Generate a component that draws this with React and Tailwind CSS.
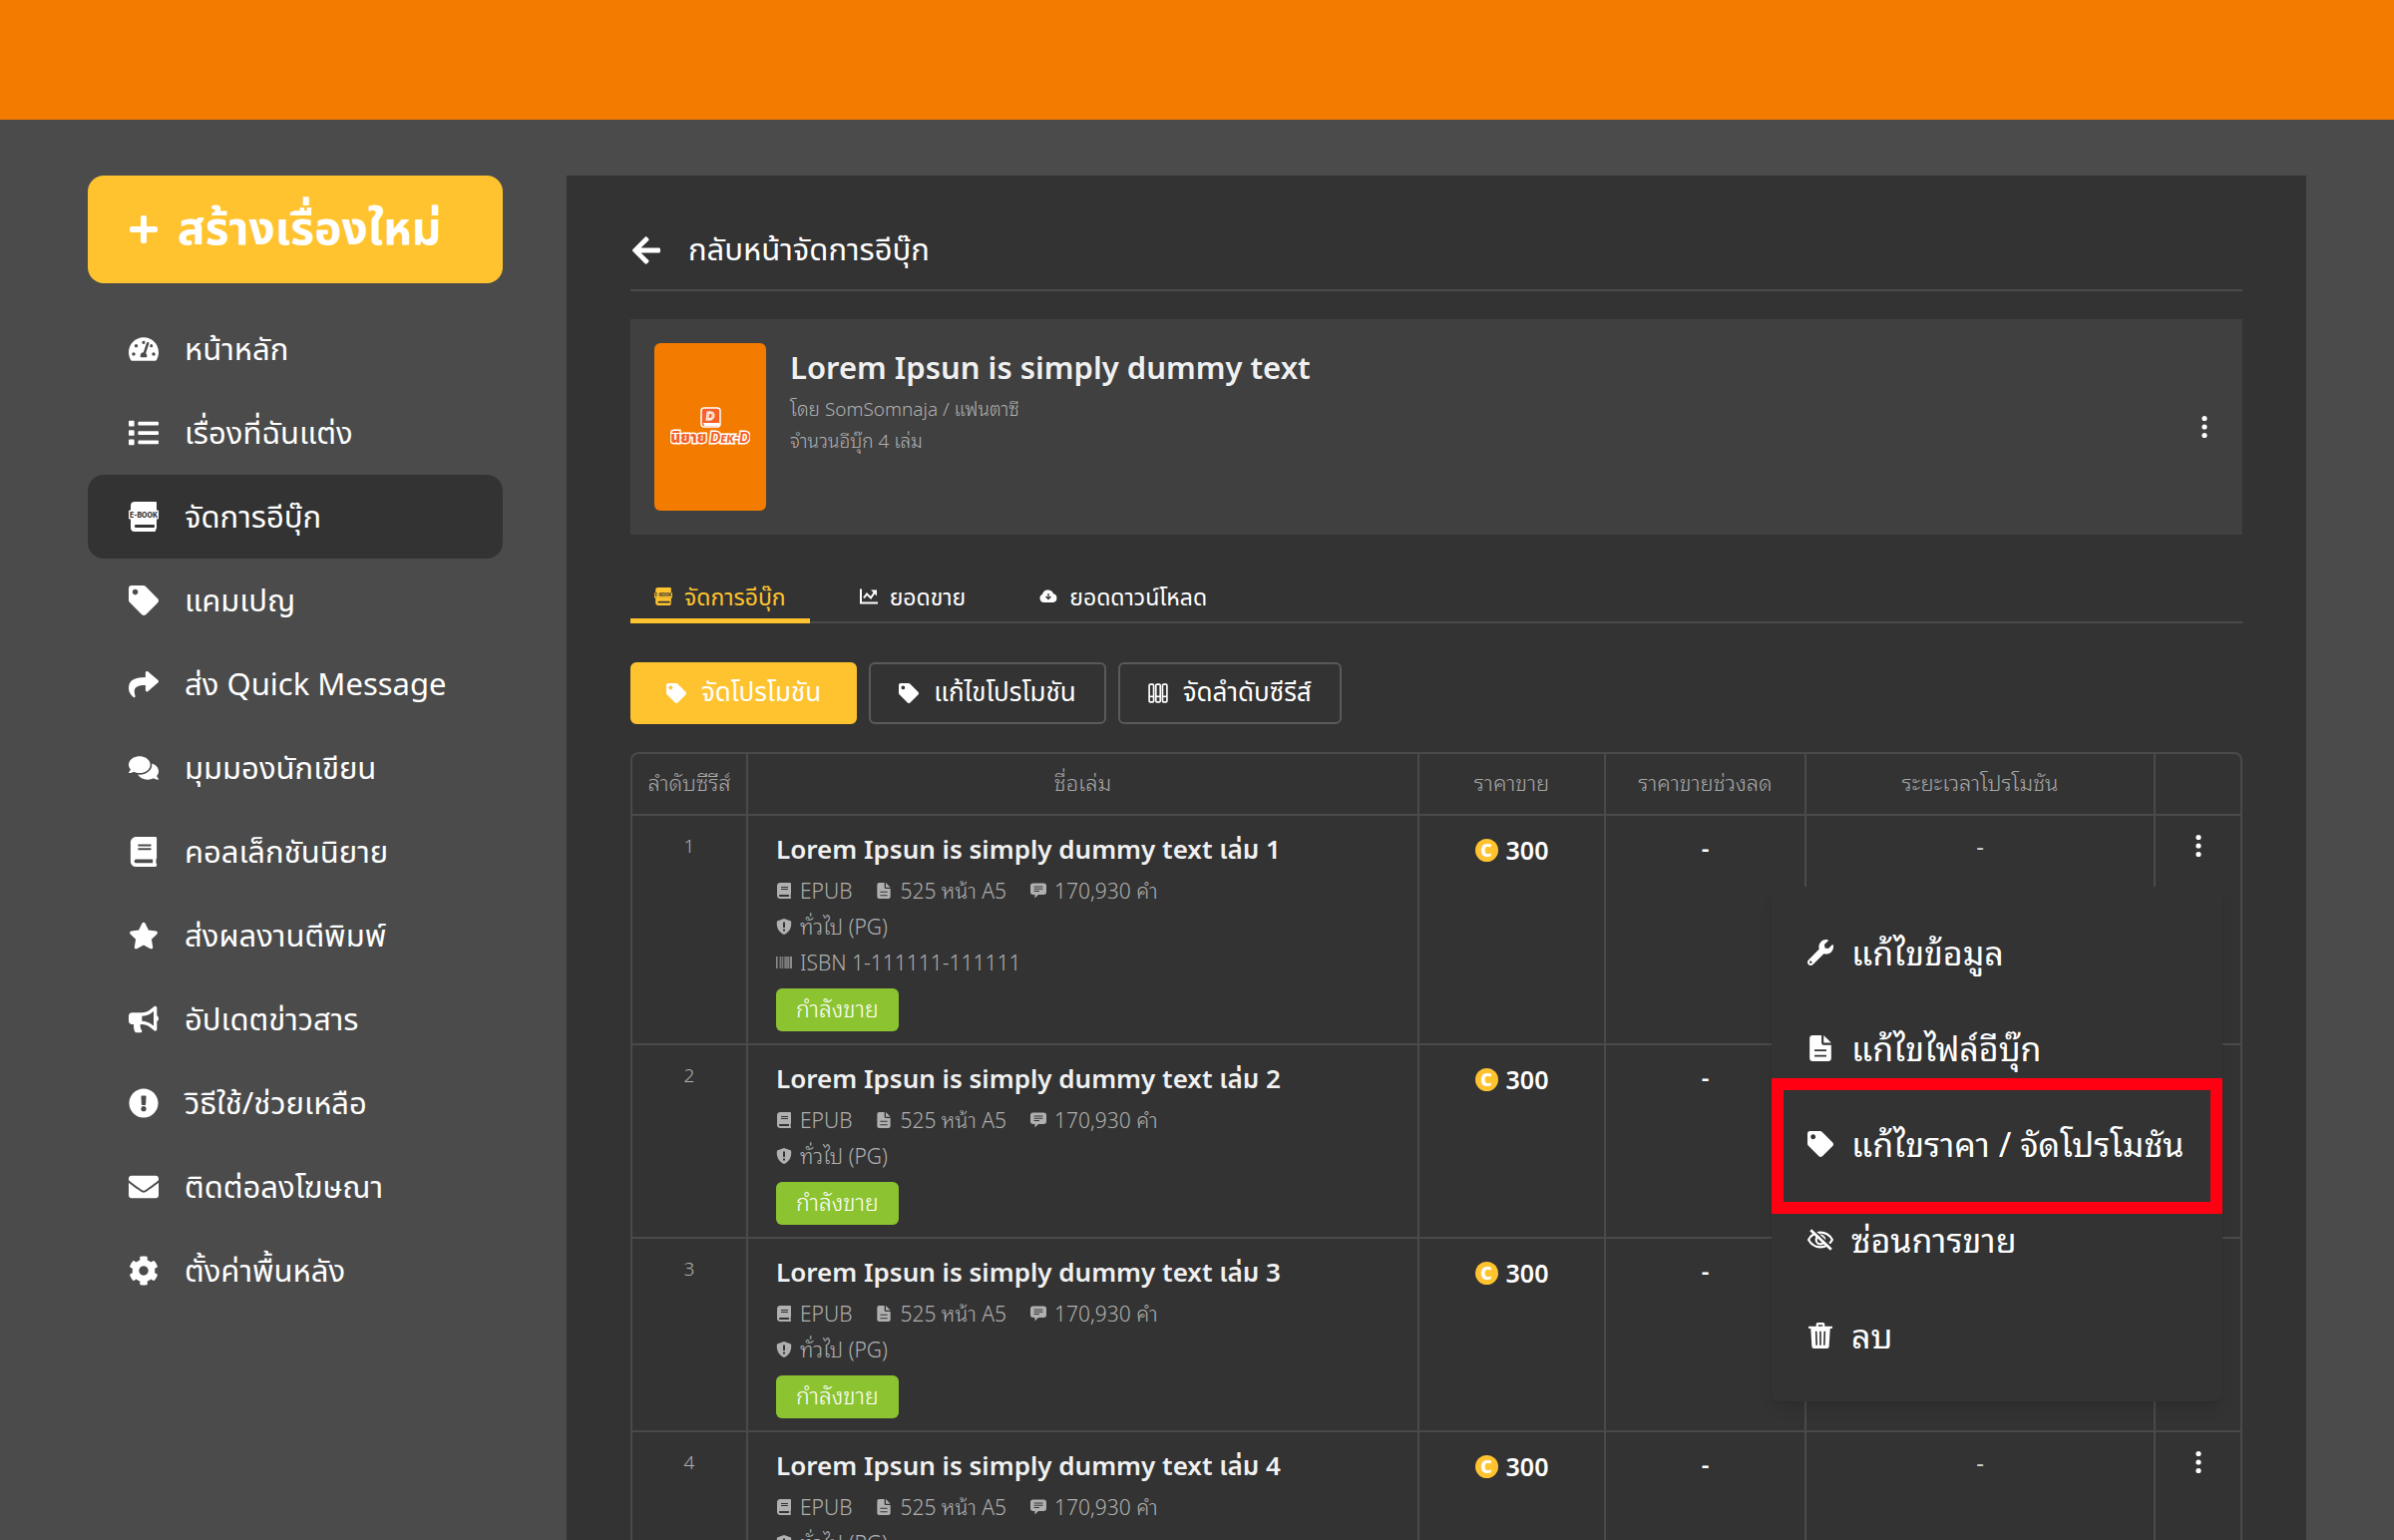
import { clsx } from 'clsx';
import {
    FaPlus, FaTachometerAlt, FaList, FaTag, FaShare, FaComments, FaBook, FaStar, FaBullhorn,
    FaExclamationCircle, FaEnvelope, FaCog, FaArrowLeft, FaWrench, FaBarcode,
} from 'react-icons/fa';

const EbookIcon = ({ className, bandClass = 'fill-[#333333]' }) => (
    <svg viewBox="0 0 30 30" className={className} fill="currentColor" aria-hidden="true">
        <path d="M6 0h21a1 1 0 0 1 1 1v8H2V4a4 4 0 0 1 4-4z" />
        <path d="M1 8.500h28a1 1 0 0 1 1 1v7a1 1 0 0 1-1 1H1a1 1 0 0 1-1-1v-7a1 1 0 0 1 1-1z" />
        <path d="M2 17h26v10l-1 1v1a1 1 0 0 1-1 1H6a4 4 0 0 1-4-4z" />
        <rect x="6" y="23" width="20" height="3" rx="1" className={bandClass} />
        <text x="15" y="15.500" textAnchor="middle" fontSize="7" fontWeight="800" fontFamily="Inter, sans-serif" className={bandClass}>
            E-BOOK
        </text>
    </svg>
);

const ChartIcon = ({ className }) => (
    <svg viewBox="0 0 18 15" className={className} fill="none" stroke="currentColor" strokeWidth="2" aria-hidden="true">
        <path d="M1 0v14h17" />
        <path d="M4 9l3-4 4 4 4-6" />
        <path d="M11 1h6v6z" fill="currentColor" stroke="none" />
    </svg>
);

const CloudIcon = ({ className }) => (
    <svg viewBox="0 0 18 14" className={className} fill="currentColor" aria-hidden="true">
        <path d="M4.500 13A4.300 4.300 0 0 1 3 4.800 5.800 5.800 0 0 1 14 4.200 4.500 4.500 0 0 1 13.700 13z" />
        <path d="M9 4v5M6.500 7L9 9.500 11.500 7" fill="none" strokeWidth="1.300" className="stroke-[#333333]" />
    </svg>
);

const SeriesIcon = ({ className }) => (
    <svg viewBox="0 0 18 18" className={className} fill="none" stroke="currentColor" strokeWidth="1.500" aria-hidden="true">
        {[1, 7, 13].map((x) => (
            <g key={x}>
                <rect x={x} y="1" width="4" height="16" rx="1" />
                <path d={`M${x} 12h4`} />
            </g>
        ))}
    </svg>
);

const FileIcon = ({ className, lineClass = 'stroke-[#333333]' }) => (
    <svg viewBox="0 0 20 24" className={className} fill="currentColor" aria-hidden="true">
        <path d="M3 0h8v7a2 2 0 0 0 2 2h7v12a3 3 0 0 1-3 3H3a3 3 0 0 1-3-3V3a3 3 0 0 1 3-3z" />
        <path d="M13 0l7 7h-7z" />
        <path d="M4.500 14h11M4.500 19h11" strokeWidth="1.600" className={lineClass} />
    </svg>
);

const NoteIcon = ({ className }) => (
    <svg viewBox="0 0 18 17" className={className} fill="currentColor" aria-hidden="true">
        <path d="M3 0h12a3 3 0 0 1 3 3v7a3 3 0 0 1-3 3H9l-4 4v-4H3a3 3 0 0 1-3-3V3a3 3 0 0 1 3-3z" />
        <path d="M4 4h10M4 6.500h10M4 9h6" strokeWidth="1.200" className="stroke-[#333333]" />
    </svg>
);

const ShieldIcon = ({ className }) => (
    <svg viewBox="0 0 16 16" className={className} fill="currentColor" aria-hidden="true">
        <path d="M8 0l7 2.500c1 5-1 11-7 13.500C2 13.500 0 7.500 1 2.500z" />
        <path d="M8 3.500v5.500M8 10.500v2" strokeWidth="2" className="stroke-[#333333]" />
    </svg>
);

const EyeOffIcon = ({ className }) => (
    <svg viewBox="0 0 24 20" className={className} fill="none" stroke="currentColor" strokeWidth="2" aria-hidden="true">
        <path d="M1 10c5-9 17-9 22 0-5 9-17 9-22 0z" />
        <circle cx="12" cy="10" r="4" />
        <path d="M4 0l19 17" className="stroke-[#333333]" strokeWidth="2" />
        <path d="M3 1l19 18" strokeWidth="2.500" />
    </svg>
);

const TrashIcon = ({ className }) => (
    <svg viewBox="0 0 22 24" className={className} fill="currentColor" aria-hidden="true">
        <path d="M7 4V1.500A1.500 1.500 0 0 1 8.500 0h5A1.500 1.500 0 0 1 15 1.500V4h-2V2H9v2z" />
        <path d="M0 3.500h22v2H0z" />
        <path d="M2 5h18l-1 17a2 2 0 0 1-2 2H5a2 2 0 0 1-2-2z" />
        <path d="M7 8l.5 13M11 8v13M15 8l-.5 13" strokeWidth="1.500" className="stroke-[#333333]" />
    </svg>
);

const DotsIcon = ({ className }) => (
    <svg viewBox="0 0 24 24" className={className} fill="currentColor" aria-hidden="true">
        <circle cx="12" cy="3.500" r="2.600" />
        <circle cx="12" cy="12" r="2.600" />
        <circle cx="12" cy="20.500" r="2.600" />
    </svg>
);

const CoverLogo = () => (
    <svg viewBox="0 0 80 40" className="w-20" role="img" aria-label="นิยาย Dek-D">
        <rect x="31" y="1" width="19" height="19" rx="3" fill="#f4622a" stroke="#fff" strokeWidth="1.500" />
        <path d="M33 16h16v3H34z" fill="#fff" />
        <text x="40" y="13" textAnchor="middle" fontSize="12" fontStyle="italic" fontWeight="700" fontFamily="Lato, sans-serif" fill="#f4622a" stroke="#fff" strokeWidth="1">D</text>
        <text x="40" y="36" textAnchor="middle" fontSize="15" fontWeight="900" fontFamily="Lato, 'Noto Sans Thai', sans-serif" fill="#f4622a" stroke="#fff" strokeWidth="3" paintOrder="stroke">
            นิยาย <tspan fontStyle="italic">Dᴇᴋ-D</tspan>
        </text>
    </svg>
);

// looped Thai letterforms, used for the table details and the row menu
const loopedFont = "font-['Noto_Sans','Noto_Sans_Thai_Looped','Loma','Noto_Serif_Thai',sans-serif]";

const navItems = [
    { label: 'หน้าหลัก', Icon: FaTachometerAlt },
    { label: 'เรื่องที่ฉันแต่ง', Icon: FaList },
    { label: 'จัดการอีบุ๊ก', Icon: EbookIcon, active: true },
    { label: 'แคมเปญ', Icon: FaTag },
    { label: 'ส่ง Quick Message', Icon: FaShare },
    { label: 'มุมมองนักเขียน', Icon: FaComments },
    { label: 'คอลเล็กชันนิยาย', Icon: FaBook },
    { label: 'ส่งผลงานตีพิมพ์', Icon: FaStar },
    { label: 'อัปเดตข่าวสาร', Icon: FaBullhorn },
    { label: 'วิธีใช้/ช่วยเหลือ', Icon: FaExclamationCircle },
    { label: 'ติดต่อลงโฆษณา', Icon: FaEnvelope },
    { label: 'ตั้งค่าพื้นหลัง', Icon: FaCog },
];

const tabs = [
    { label: 'จัดการอีบุ๊ก', Icon: EbookIcon, active: true },
    { label: 'ยอดขาย', Icon: ChartIcon },
    { label: 'ยอดดาวน์โหลด', Icon: CloudIcon },
];

const actions = [
    { label: 'จัดโปรโมชัน', Icon: FaTag, primary: true },
    { label: 'แก้ไขโปรโมชัน', Icon: FaTag },
    { label: 'จัดลำดับซีรีส์', Icon: SeriesIcon },
];

const menuItems = [
    { label: 'แก้ไขข้อมูล', Icon: FaWrench },
    { label: 'แก้ไขไฟล์อีบุ๊ก', Icon: FileIcon },
    { label: 'แก้ไขราคา / จัดโปรโมชัน', Icon: FaTag, highlighted: true },
    { label: 'ซ่อนการขาย', Icon: EyeOffIcon },
    { label: 'ลบ', Icon: TrashIcon },
];

const volumes = [
    { no: 1, isbn: '1-111111-111111', period: '-', menuOpen: true },
    { no: 2 },
    { no: 3 },
    { no: 4, period: '-' },
];

const Sidebar = () => (
    <aside className="w-[416px] shrink-0">
        <button className="flex h-[108px] w-full items-center gap-[18px] rounded-2xl bg-[#ffc32f] px-10 text-[46px] font-bold text-white">
            <FaPlus className="size-8" />
            <span className="pb-1.5">สร้างเรื่องใหม่</span>
        </button>
        <nav className="mt-6 flex flex-col">
            {navItems.map(({ label, Icon, active }) => (
                <a
                    key={label}
                    href="#"
                    className={clsx('flex h-[84px] items-center gap-[26px] rounded-2xl px-[41px] text-[31px] text-white', active && 'bg-[#333333]')}
                >
                    <Icon className="size-[30px]" />
                    <span className="pb-0.5">{label}</span>
                </a>
            ))}
        </nav>
    </aside>
);

const BookCard = () => (
    <section className="mt-7 flex gap-6 bg-[#404040] p-6">
        <div className="flex h-[168px] w-28 items-center justify-center rounded-md bg-[#f37b00]">
            <CoverLogo />
        </div>
        <div className="flex-1">
            <h1 className="mb-0.5 text-[31px] leading-[48px] font-semibold text-[#f0f0f0]">Lorem Ipsun is simply dummy text</h1>
            <div className={clsx('text-[19px] leading-8 font-light text-[#b0b0b0]', loopedFont)}>
                <p>โดย SomSomnaja / แฟนตาซี</p>
                <p>จำนวนอีบุ๊ก 4 เล่ม</p>
            </div>
        </div>
        <button aria-label="ตัวเลือก" className="self-center px-0.5 text-white">
            <DotsIcon className="size-6" />
        </button>
    </section>
);

const Tabs = () => (
    <div className="mt-10 flex h-[49px] gap-[26px] border-b-2 border-[#4a4a4a]">
        {tabs.map(({ label, Icon, active }) => (
            <button
                key={label}
                className={clsx(
                    '-mb-0.5 flex items-center gap-3 border-b-5 px-6 text-[23px] leading-8',
                    active ? 'border-[#ffc32f] text-[#ffc32f]' : 'border-transparent text-white'
                )}
            >
                <Icon className="size-[18px]" />
                <span>{label}</span>
            </button>
        ))}
    </div>
);

const RowMenu = () => (
    <div
        role="menu"
        className={clsx('absolute top-[71px] right-[18px] z-10 w-[452px] rounded-lg bg-[#333333] py-[18px] text-left shadow-lg', loopedFont)}
    >
        {menuItems.map(({ label, Icon, highlighted }) => (
            <button key={label} role="menuitem" className="relative flex h-24 w-full items-center gap-[18px] px-9 text-[34px] whitespace-nowrap text-white">
                <Icon className="size-[26px] shrink-0" />
                <span>{label}</span>
                {highlighted && <span className="absolute inset-x-0 -top-[18px] -bottom-[22px] border-12 border-[#ff0012]" />}
            </button>
        ))}
    </div>
);

const Meta = ({ Icon, children }) => (
    <span className="flex items-center gap-2">
        <Icon className="size-4" />
        <span>{children}</span>
    </span>
);

const VolumeRow = ({ no, isbn, period, menuOpen }) => (
    <tr className="border-t-2 border-[#4a4a4a] align-top">
        <td className="pt-[14px] text-center text-[19px] leading-8 font-light text-[#b0b0b0]">{no}</td>
        <td className="border-l-2 border-[#4a4a4a] px-7 py-3">
            <h2 className="mb-0.5 text-[26px] leading-[43px] font-semibold text-[#f0f0f0]">Lorem Ipsun is simply dummy text เล่ม {no}</h2>
            <div className={clsx('text-[21px] leading-9 font-light text-[#b0b0b0]', loopedFont)}>
                <div className="flex gap-6">
                    <Meta Icon={FaBook}>EPUB</Meta>
                    <Meta Icon={FileIcon}>525 หน้า A5</Meta>
                    <Meta Icon={NoteIcon}>170,930 คำ</Meta>
                </div>
                <Meta Icon={ShieldIcon}>ทั่วไป (PG)</Meta>
                {isbn && <Meta Icon={FaBarcode}>ISBN {isbn}</Meta>}
            </div>
            <span className={clsx('mt-2 flex h-[43px] w-fit items-center rounded-md bg-[#8cc431] px-5 text-[23px] leading-9 font-light text-white', loopedFont)}>
                <span className="pb-1">กำลังขาย</span>
            </span>
        </td>
        <td className="border-l-2 border-[#4a4a4a] pt-4">
            <div className="flex items-center justify-center gap-2 text-[25px] leading-9 font-semibold text-white">
                <span className="flex size-[23px] items-center justify-center rounded-full bg-[#ffc32f] text-lg font-black">C</span>
                300
            </div>
        </td>
        <td className="border-l-2 border-[#4a4a4a] pt-[14px] text-center text-2xl leading-9 font-semibold text-white">-</td>
        <td className="border-l-2 border-[#4a4a4a] pt-3 text-center text-2xl leading-9 text-[#d0d0d0]">{period}</td>
        <td className="relative border-l-2 border-[#4a4a4a] pt-[18px] text-center">
            <button aria-label={`ตัวเลือกเล่ม ${no}`} className="text-white">
                <DotsIcon className="size-6" />
            </button>
            {menuOpen && <RowMenu />}
        </td>
    </tr>
);

const VolumeTable = () => (
    <div className="mt-7 rounded-lg border-2 border-[#4a4a4a]">
        <table className="w-full table-fixed border-collapse">
            <colgroup>
                <col className="w-[115px]" />
                <col />
                <col className="w-[187px]" />
                <col className="w-[201px]" />
                <col className="w-[350px]" />
                <col className="w-[86px]" />
            </colgroup>
            <thead>
                <tr className={clsx('h-[61px] text-[22px] leading-8 whitespace-nowrap text-[#a6a6a6]', loopedFont)}>
                    <th className="pb-1 font-light">ลำดับซีรีส์</th>
                    <th className="border-l-2 border-[#4a4a4a] pb-1 font-light">ชื่อเล่ม</th>
                    <th className="border-l-2 border-[#4a4a4a] pb-1 font-light">ราคาขาย</th>
                    <th className="border-l-2 border-[#4a4a4a] pb-1 font-light">ราคาขายช่วงลด</th>
                    <th className="border-l-2 border-[#4a4a4a] pb-1 font-light">ระยะเวลาโปรโมชัน</th>
                    <th className="border-l-2 border-[#4a4a4a]" aria-label="ตัวเลือก" />
                </tr>
            </thead>
            <tbody>
                {volumes.map((volume) => (
                    <VolumeRow key={volume.no} {...volume} />
                ))}
            </tbody>
        </table>
    </div>
);

const App = () => (
    <div className="flex h-screen flex-col overflow-hidden bg-[#4b4b4b] font-['Noto_Sans','Noto_Sans_Thai',sans-serif]">
        <header className="h-[120px] shrink-0 bg-[#f37b00]" />
        <div className="flex min-h-0 flex-1 gap-16 px-[88px] pt-14">
            <Sidebar />
            <main className="min-w-0 flex-1 bg-[#333333] px-16 pt-9">
                <a href="#" className="flex h-20 items-center gap-[26px] border-b-2 border-[#4a4a4a] text-[31px] text-white">
                    <FaArrowLeft className="size-8" />
                    <span className="pb-1">กลับหน้าจัดการอีบุ๊ก</span>
                </a>
                <BookCard />
                <Tabs />
                <div className="mt-[39px] flex gap-3">
                    {actions.map(({ label, Icon, primary }) => (
                        <button
                            key={label}
                            className={clsx(
                                'flex h-[62px] items-center gap-[15px] rounded-md border-2 text-[26px] text-white',
                                primary ? 'border-[#ffc32f] bg-[#ffc32f] px-[34px]' : 'border-[#5a5a5a] px-7'
                            )}
                        >
                            <Icon className="size-5" />
                            <span className="pb-1">{label}</span>
                        </button>
                    ))}
                </div>
                <VolumeTable />
            </main>
        </div>
    </div>
);

export default App;
